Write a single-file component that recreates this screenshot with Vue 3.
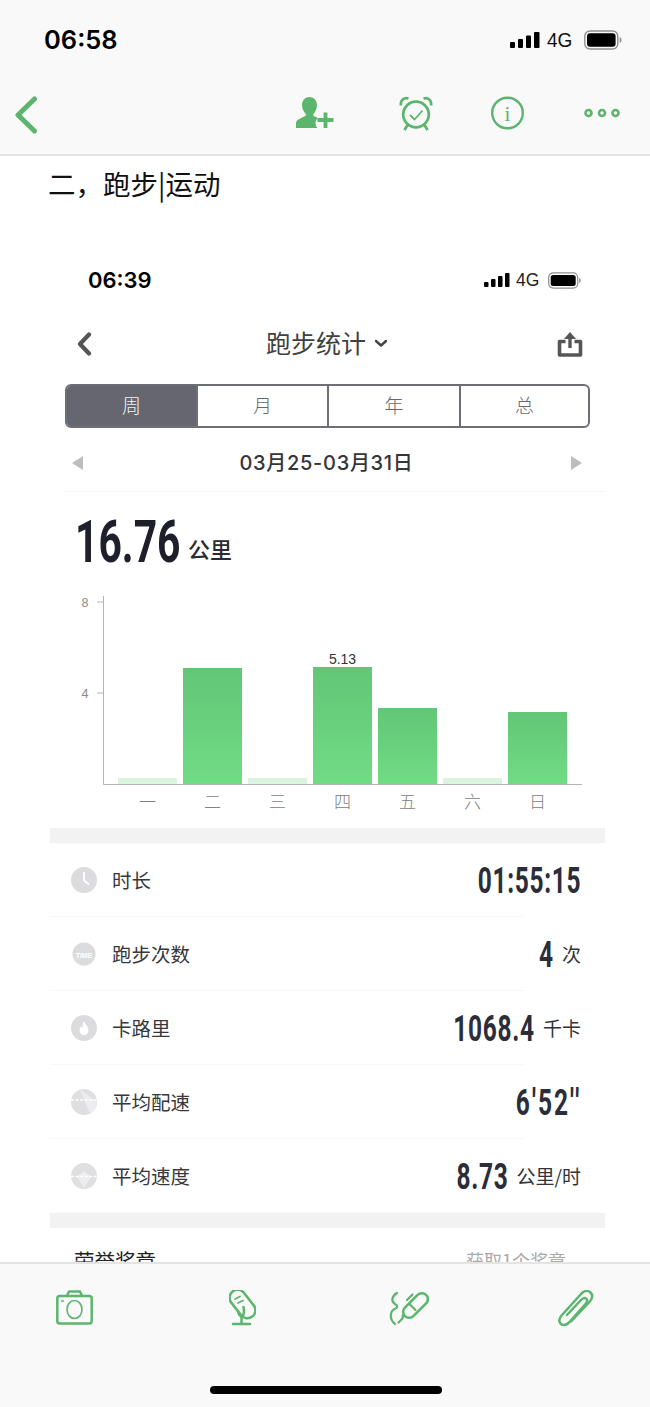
<script setup>
const heading = '二\uFF0C跑步|运动'
const bars = [
  { h: 6, pale: true, label: '一' },
  { h: 116, label: '二' },
  { h: 6, pale: true, label: '三' },
  { h: 117, label: '四', value: '5.13' },
  { h: 76, label: '五' },
  { h: 6, pale: true, label: '六' },
  { h: 72, label: '日' }
]
const rows = [
  { icon: 'clock', name: '时长', value: '01:55:15', unit: '' },
  { icon: 'time', name: '跑步次数', value: '4', unit: '次' },
  { icon: 'fire', name: '卡路里', value: '1068.4', unit: '千卡' },
  { icon: 'pace', name: '平均配速', value: "6'52''", unit: '' },
  { icon: 'speed', name: '平均速度', value: '8.73', unit: '公里/时' }
]
</script>

<template>
  <div class="page">
    <header class="top">
      <div class="status">
        <span class="clock">06:58</span>
        <span class="status-right">
          <svg width="30" height="16" viewBox="0 0 30 16" fill="#000"><rect x="0" y="10" width="5" height="6" rx="1"/><rect x="8" y="7" width="5" height="9" rx="1"/><rect x="16" y="3.5" width="5" height="12.5" rx="1"/><rect x="24" y="0" width="5.5" height="16" rx="1"/></svg>
          <span class="net">4G</span>
          <svg width="38" height="20" viewBox="0 0 38 20"><rect x="0.8" y="1" width="33" height="18" rx="5" fill="none" stroke="#8e8e8e" stroke-width="1.4"/><rect x="3" y="3.2" width="28.6" height="13.6" rx="3" fill="#000"/><path d="M35.6 7v6c1.4-.5 2-1.6 2-3s-.6-2.500-2-3z" fill="#999"/></svg>
        </span>
      </div>
      <nav class="tools">
        <svg class="back" width="24" height="38" viewBox="0 0 24 38"><path d="M20.500 3 4 19l16.500 16" fill="none" stroke="#5cb56d" stroke-width="5" stroke-linecap="round" stroke-linejoin="round"/></svg>
        <svg class="t-person" width="38" height="33" viewBox="0 0 38 33" fill="#5cb56d"><path d="M0 31v-5c0-4 7-5 10.500-8C7.500 15 6 11 6 8 6 3 9.500 0 13.500 0s7.500 3 7.500 8c0 3-1.500 7-4 10 .8 1.500 3 2 5 3-1.500 1.500-2.500 3-2.500 5 0 2 .8 3.600 2 5z"/><path d="M21.500 23h16M29.500 15.500v15.500" fill="none" stroke="#5cb56d" stroke-width="3.800"/></svg>
        <svg class="t-alarm" width="34" height="35" viewBox="0 0 34 35" fill="none" stroke="#5cb56d"><circle cx="17" cy="18.500" r="12.800" stroke-width="2.700"/><path d="M11 19l4.500 4.500 8-9" stroke-width="1.800"/><path d="M2 9.500C1 4.500 5 1 9.500 2.500M32 9.500c1-5-3-8.500-7.500-7" stroke-width="2.700"/><path d="M8.500 29 5.500 34M25.500 29l3 5" stroke-width="2.700"/></svg>
        <svg class="t-info" width="33" height="34" viewBox="0 0 33 34" fill="none"><circle cx="16.500" cy="17" r="15.300" stroke="#5cb56d" stroke-width="2.400"/><text x="16.500" y="24.500" text-anchor="middle" class="info-i">i</text></svg>
        <svg class="t-dots" width="36" height="10" viewBox="0 0 36 10" fill="none" stroke="#5cb56d" stroke-width="2.600"><circle cx="4.500" cy="5" r="3"/><circle cx="18" cy="5" r="3"/><circle cx="31.500" cy="5" r="3"/></svg>
      </nav>
    </header>

    <main class="main">
      <h1 class="heading">{{ heading }}</h1>
      <section class="shot">
        <div class="in-status">
          <span class="in-clock">06:39</span>
          <span class="in-right">
            <svg width="26" height="14" viewBox="0 0 26 14" fill="#000"><rect x="0" y="9" width="4.500" height="5" rx="1"/><rect x="7" y="6" width="4.500" height="8" rx="1"/><rect x="14" y="3" width="4.500" height="11" rx="1"/><rect x="21" y="0" width="4.500" height="14" rx="1"/></svg>
            <span class="in-net">4G</span>
            <svg width="33" height="17" viewBox="0 0 33 17"><rect x="0.700" y="0.900" width="29" height="15.200" rx="4.500" fill="none" stroke="#8e8e8e" stroke-width="1.200"/><rect x="2.700" y="2.900" width="25" height="11.200" rx="2.500" fill="#000"/><path d="M31 6v5c1.200-.4 1.800-1.300 1.800-2.500S32.200 6.400 31 6z" fill="#999"/></svg>
          </span>
        </div>
        <div class="in-nav">
          <svg width="15" height="24" viewBox="0 0 15 24"><path d="M12 2.500 3 12l9 9.500" fill="none" stroke="#555" stroke-width="4.200" stroke-linecap="round" stroke-linejoin="round"/></svg>
          <span class="title">跑步统计<svg class="caret" width="14" height="9" viewBox="0 0 14 9"><path d="M2 2l5 4.500L12 2" fill="none" stroke="#444" stroke-width="2.400" stroke-linecap="round" stroke-linejoin="round"/></svg></span>
          <svg width="26" height="26" viewBox="0 0 26 26" fill="none"><path d="M8.500 10.500H2.500v13.500h21V10.500h-6" stroke="#555" stroke-width="3.600" stroke-linejoin="round"/><path d="M13 17V4" stroke="#555" stroke-width="3.400"/><path d="M7 8 13 1l6 7z" fill="#555"/></svg>
        </div>
        <div class="seg">
          <span class="on">周</span><span>月</span><span>年</span><span>总</span>
        </div>
        <div class="date">
          <i class="tri left"></i>
          <span>03月25-03月31日</span>
          <i class="tri right"></i>
        </div>
        <div class="total">
          <span class="big">16.76</span>
          <span class="big-unit">公里</span>
        </div>
        <svg class="chart" width="555" height="238" viewBox="0 0 555 238">
          <defs>
            <linearGradient id="barfill" x1="0" y1="0" x2="0" y2="1">
              <stop offset="0" stop-color="#62c677"/>
              <stop offset="1" stop-color="#70dc84"/>
            </linearGradient>
          </defs>
          <path d="M53.500 6v188.500H532M47 12h6.500M47 103h6.500" fill="none" stroke="#b4b4b4" stroke-width="1"/>
          <text x="35" y="17" class="tick">8</text>
          <text x="35" y="108" class="tick">4</text>
          <g v-for="(b, i) in bars" :key="b.label">
            <rect :x="68 + i * 65" :y="194 - b.h" width="59" :height="b.h" :fill="b.pale ? '#dcf3e0' : 'url(#barfill)'" />
            <text :x="97.500 + i * 65" y="218" class="day">{{ b.label }}</text>
            <text v-if="b.value" :x="97.500 + i * 65" :y="191 - b.h" class="val">{{ b.value }}</text>
          </g>
        </svg>
        <div class="band"></div>
        <div class="rows">
          <template v-for="(r, i) in rows" :key="r.name">
            <div class="row">
              <svg class="ricon" width="26" height="26" viewBox="0 0 26 26">
                <circle cx="13" cy="13" :r="r.icon === 'time' ? 11.500 : 13" :fill="r.icon === 'pace' || r.icon === 'speed' ? '#dfdfe1' : '#dcdcde'"/>
                <path v-if="r.icon === 'clock'" d="M13 5v8.500l5 4" fill="none" stroke="#fff" stroke-width="1.800"/>
                <text v-if="r.icon === 'time'" x="13" y="16.500" class="time-t">TIME</text>
                <path v-if="r.icon === 'fire'" d="M13 6c.5 3 4.500 5 4.500 9.500a4.500 4.500 0 0 1-9 0c0-2 1-3.500 2-4.500.3 1 .7 1.500 1.300 1.800C11.500 10 12 8 13 6z" fill="#fff"/>
                <path v-if="r.icon === 'pace'" d="M9 0.500 26 13c0 6-3 10-7 12z" fill="#ededef"/>
                <path v-if="r.icon === 'pace'" d="M0 11h26" fill="none" stroke="#fff" stroke-width="1.300" stroke-dasharray="3 1.500"/>
                <path v-if="r.icon === 'speed'" d="M6 14 13 8l7 6-7 11z" fill="#ededef"/>
                <path v-if="r.icon === 'speed'" d="M0 13.500h26" fill="none" stroke="#fff" stroke-width="1.300" stroke-dasharray="3 1.500"/>
              </svg>
              <span class="rname">{{ r.name }}</span>
              <span class="rval" :class="{ wide: r.icon === 'pace' }">{{ r.value }}</span>
              <span v-if="r.unit" class="runit">{{ r.unit }}</span>
            </div>
            <div v-if="i < rows.length - 1" class="sep"></div>
          </template>
        </div>
        <div class="band"></div>
        <div class="medal">
          <span class="m-name">荣誉奖章</span>
          <span class="m-more">获取1个奖章</span>
        </div>
      </section>
    </main>

    <footer class="bottom">
      <div class="b-icons">
        <svg width="37" height="35" viewBox="0 0 37 35" fill="none" stroke="#5cb56d" stroke-width="2.500" stroke-linejoin="round"><path d="M11 6l2-4.500h11L26 6"/><rect x="1.300" y="6" width="34.400" height="27.500" rx="2.500"/><ellipse cx="18.500" cy="19.500" rx="7.500" ry="9" stroke-width="1.600"/><path d="M5 11h3" stroke-width="1.500"/></svg>
        <svg class="b-mic" width="27" height="36" viewBox="0 0 27 36" fill="none" stroke="#5cb56d" stroke-width="2.500" stroke-linecap="round">
          <rect x="-16" y="-8" width="32" height="16" rx="8" transform="translate(13.500 14) rotate(52)"/>
          <path d="M6 9l5-2.500M9 13l5-2.500" stroke-width="1.700"/>
          <path d="M9 21c.5 4 2.500 5.500 4 5 2-.6 2.500-5 1.500-9"/>
          <path d="M12.500 27v7M4 34h17"/>
        </svg>
        <svg class="b-pen" width="41" height="36" viewBox="0 0 41 36" fill="none" stroke="#5cb56d" stroke-width="2.200" stroke-linecap="round" stroke-linejoin="round">
          <path d="M9 3C4 6 2.500 11 7 14c2.500 1.500 3 3 1 4.300C1.500 20.500 1 29 7 34"/>
          <rect x="-15" y="-6" width="30" height="12" rx="6" transform="translate(27.500 15.500) rotate(-45)" stroke-width="2.500"/>
          <path d="M21.500 14l6 6M15 25l-.5 3.500-4 4M19 10l5.500-5.500" stroke-width="2.200"/>
        </svg>
        <svg width="36" height="36" viewBox="0 0 36 36" fill="none" stroke="#5cb56d" stroke-width="2.500" stroke-linecap="round" stroke-linejoin="round"><path d="M13 31.500 31.500 12c3-3.500 3.500-7 1-9.500s-6-2-9 1L4 25c-2.800 3-3.500 6-1.500 8.500S8 35.500 11 32.500L27.500 14c1.800-2.200 2.200-4 .8-5.300s-3.300-.8-5.300 1.300L9 25"/></svg>
      </div>
      <div class="home"></div>
    </footer>
  </div>
</template>

<style>
html, body { margin: 0; background: #fff; }
</style>

<style scoped>
.page {
  width: 650px;
  height: 1407px;
  display: flex;
  flex-direction: column;
  overflow: hidden;
  background: #fff;
  font-family: "Noto Sans CJK SC", "Noto Sans", sans-serif;
}
.top {
  height: 154px;
  flex: none;
  background: #f9f9f9;
  border-bottom: 2px solid #e4e4e4;
}
.status {
  height: 78px;
  box-sizing: border-box;
  padding: 2px 28px 0 44px;
  display: flex;
  align-items: center;
  justify-content: space-between;
}
.clock {
  font: 600 25.500px/30px Inter, sans-serif;
  color: #000;
}
.status-right { display: flex; align-items: center; }
.net {
  font: 400 20px/20px "Liberation Sans", sans-serif;
  width: 28px;
  margin: 0 9px 0 7px;
  color: #111;
  transform: scaleX(.95);
  transform-origin: left;
}
.tools {
  height: 76px;
  box-sizing: border-box;
  display: flex;
  align-items: center;
  padding: 0 30px 6px 14px;
}
.back { margin-top: 4px; }
.t-person { margin-left: 258px; }
.t-alarm { margin-left: 65px; }
.t-info { margin-left: 58px; }
.t-dots { margin-left: 60px; }
.info-i { font: 400 21px "Liberation Serif", serif; fill: #5cb56d; }
.main { flex: 1; min-height: 0; overflow: hidden; }
.heading {
  margin: 0;
  height: 94px;
  padding: 8px 0 0 48px;
  box-sizing: border-box;
  font: 400 27.500px/38px "Noto Sans CJK SC", sans-serif;
  color: #111;
}
.shot {
  width: 555px;
  margin-left: 50px;
  background: #fff;
}
.in-status {
  height: 60px;
  display: flex;
  align-items: center;
  justify-content: space-between;
  padding: 0 24px 0 38px;
}
.in-clock { font: 600 22px/26px Inter, sans-serif; color: #000; }
.in-right { display: flex; align-items: center; }
.in-net {
  font: 400 17.500px/18px "Liberation Sans", sans-serif;
  width: 25px;
  margin: 0 7px 0 6px;
  color: #222;
}
.in-nav {
  height: 68px;
  display: flex;
  align-items: center;
  justify-content: space-between;
  padding: 0 22px 0 27px;
}
.title {
  display: flex;
  align-items: center;
  margin: -4px 0 0 5px;
  font: 400 25px/34px "Noto Sans CJK SC", sans-serif;
  color: #3f3f44;
}
.caret { margin-left: 8px; margin-top: 2px; }
.seg {
  width: 525px;
  height: 44px;
  margin: 6px 0 0 15px;
  box-sizing: border-box;
  display: grid;
  grid-template-columns: 129px 131px 132px 1fr;
  border: 2px solid #6e6e76;
  border-radius: 6px;
  overflow: hidden;
}
.seg span {
  display: flex;
  align-items: center;
  justify-content: center;
  padding-bottom: 3px;
  font: 300 19px/1 "Noto Sans CJK SC", sans-serif;
  color: #66666c;
  border-left: 2px solid #6e6e76;
}
.seg span:first-child { border-left: 0; }
.seg .on { background: #65666f; color: #f2f2f2; }
.date {
  height: 56px;
  margin: 7px 0 0 15px;
  padding: 0 23px 0 7px;
  display: flex;
  align-items: center;
  justify-content: space-between;
  font: 500 20px/1 Inter, "Noto Sans CJK SC", sans-serif;
  letter-spacing: .7px;
  color: #35353a;
  border-bottom: 1px solid #f6f6f6;
}
.date span { margin-left: -1px; }
.tri { width: 0; height: 0; border-top: 7px solid transparent; border-bottom: 7px solid transparent; }
.tri.left { border-right: 11px solid #bdbdbd; }
.tri.right { border-left: 11px solid #bdbdbd; }
.total {
  height: 98px;
  box-sizing: border-box;
  padding: 19px 0 0 25px;
  display: flex;
  align-items: flex-start;
}
.big {
  display: block;
  width: 113px;
  font: 700 60px/62px Roboto, sans-serif;
  color: #1e1f2b;
  white-space: nowrap;
  transform: scaleX(.68);
  transform-origin: left;
}
.big-unit {
  margin-top: 26px;
  font: 500 22px/1 "Noto Sans CJK SC", sans-serif;
  color: #2b2b30;
}
.chart { display: block; }
.tick {
  font: 400 12.500px "Liberation Sans", sans-serif;
  fill: #8a8a8a;
  text-anchor: middle;
}
.day {
  font: 300 17px "Noto Sans CJK SC", sans-serif;
  fill: #808080;
  text-anchor: middle;
}
.val {
  font: 400 14px "Liberation Sans", sans-serif;
  fill: #333;
  text-anchor: middle;
}
.band { height: 15px; background: #f2f2f2; }
.rows { padding-bottom: 1px; }
.row {
  height: 73px;
  display: flex;
  align-items: center;
  padding: 0 24px 0 20.500px;
}
.ricon { flex: none; }
.rname {
  flex: 1;
  margin-left: 15.500px;
  font: 400 19.500px/1 "Noto Sans CJK SC", sans-serif;
  color: #37373c;
}
.rval {
  margin-top: 2px;
  font: 700 36px/40px Roboto, sans-serif;
  letter-spacing: 1px;
  color: #2b2d39;
  white-space: nowrap;
  transform: scaleX(.68);
  transform-origin: right;
}
.rval.wide { letter-spacing: 3px; }
.runit {
  margin-left: 8px;
  font: 400 19px/1 "Noto Sans CJK SC", sans-serif;
  color: #33333a;
}
.sep { width: 475px; height: 1px; background: #f8f8f8; }
.time-t {
  font: 700 7px "Liberation Sans", sans-serif;
  fill: #fff;
  text-anchor: middle;
}
.medal {
  height: 64px;
  display: flex;
  align-items: center;
  justify-content: space-between;
  padding: 0 39px 0 24px;
}
.m-name { font: 400 20.500px/1 "Noto Sans CJK SC", sans-serif; color: #222; }
.m-more { font: 400 18px/1 "Noto Sans CJK SC", sans-serif; color: #aaa; }
.bottom {
  height: 143px;
  flex: none;
  background: #f9f9f9;
  border-top: 2px solid #e4e4e4;
  display: flex;
  flex-direction: column;
}
.b-icons {
  display: grid;
  grid-template-columns: 173px 159px 170px 36px;
  align-items: start;
  padding: 26px 0 0 56px;
}
.home {
  width: 232px;
  height: 8px;
  margin: 60px 0 0 209.500px;
  border-radius: 4px;
  background: #000;
}
</style>
